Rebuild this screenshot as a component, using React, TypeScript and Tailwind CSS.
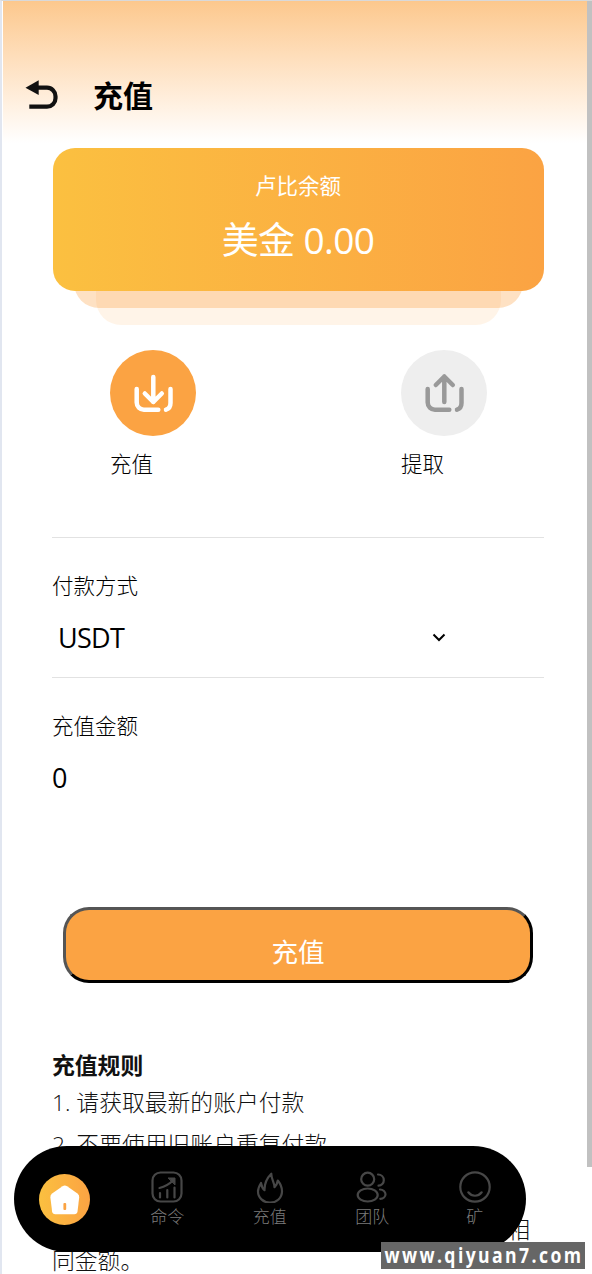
import type { ReactNode } from 'react';

interface NavItem {
    label: string;
    icon: ReactNode;
}

const navItems: NavItem[] = [
    {
        label: '命令',
        icon: (
            <>
                <rect x="1.500" y="1.500" width="29" height="29" rx="8" />
                <path d="M8.500 17c6-1.500 10-4 14-8" />
                <path d="M17.500 7h6.500v6.500z" fill="#474747" strokeWidth="1" />
                <path d="M9 22v4.500M16.300 19v7.500M23.500 16.500v10" />
            </>
        ),
    },
    {
        label: '充值',
        icon: (
            <path d="M17.300 2.700c-.2 5.300 3.200 8.500 3.200 13.500 1.700-1.700 2.800-3.700 3.300-6.700 2.700 3.400 4.200 7 4.200 10.700 0 6.700-5.300 11.500-12 11.500S4 26.700 4 20.500c0-3.200 1.200-5.500 3-8.500.5 3 1.400 5.500 3.500 7.200C10.300 12.500 12.500 7.500 17.300 2.700z" />
        ),
    },
    {
        label: '团队',
        icon: (
            <>
                <circle cx="11.700" cy="8.200" r="6.500" />
                <ellipse cx="11.700" cy="24" rx="10" ry="6.500" />
                <path d="M22 3.500c3.500 0 5.800 2.700 5.800 5.700s-2.300 5.500-5.300 5.500M24 18.500c3.200 0 5.500 2.300 5.500 4.800s-2.300 4.500-5.200 4.500" />
            </>
        ),
    },
    {
        label: '矿',
        icon: (
            <>
                <circle cx="16" cy="16" r="14.700" />
                <path d="M9.300 21.300c3.700 4.600 9.700 4.600 13.400 0" />
            </>
        ),
    },
];

const rules = ['1. 请获取最新的账户付款', '2. 不要使用旧账户重复付款', '3. 付款后请提交凭证'];

function Header() {
    return (
        <header className="flex h-[147px] items-start bg-linear-to-b from-[#fcc88d] to-white to-[142px] pt-[77px] pl-[21px]">
            <svg width="36" height="33" viewBox="0 0 36 33" fill="none">
                <path d="M1.500 9.700L14.700 2.300V17z" fill="#111" />
                <path
                    d="M14 9.700h9a8.500 8.500 0 0 1 8.500 8.500v2a8.500 8.500 0 0 1-8.500 8.500H5.300"
                    stroke="#111"
                    strokeWidth="4.200"
                />
            </svg>
            <h1 className="ml-[33px] text-[30px] leading-9 font-bold">充值</h1>
        </header>
    );
}

function BalanceCard() {
    return (
        <section className="relative ml-[49.500px] h-[177px] w-[491px]">
            {/* Stacked sheets under the card */}
            <div className="absolute inset-x-[43px] top-24 bottom-0 rounded-[25px] bg-[#fba343]/12" />
            <div className="absolute inset-x-[21px] top-20 bottom-[17px] rounded-[25px] bg-[#fba343]/32" />
            <div className="relative flex h-[143px] flex-col items-center rounded-[22px] bg-linear-to-r from-[#fbc040] to-[#fba343] pt-[22px] text-white">
                <p className="text-[21.500px] leading-[32px]">卢比余额</p>
                <p className="mt-[10px] text-[37px] leading-[56px] tracking-[-0.600px]">美金 0.00</p>
            </div>
        </section>
    );
}

function TransferAction({ label, active, children }: { label: string; active?: boolean; children: ReactNode }) {
    return (
        <div className="w-[86px]">
            <div className={active ? 'rounded-full bg-[#fba343] text-white' : 'rounded-full bg-[#eee] text-[#999]'}>
                <svg
                    className="size-[86px]"
                    viewBox="0 0 86 86"
                    fill="none"
                    stroke="currentColor"
                    strokeWidth="4.500"
                    strokeLinecap="round"
                    strokeLinejoin="round"
                >
                    {children}
                    <path d="M26.700 39v13.500a7.200 7.200 0 0 0 7.200 7.200h14.400M60.500 39v14c0 3.500-1.500 5.700-4.500 6.700" />
                </svg>
            </div>
            <p className="mt-3 text-[21.500px] leading-8 font-light">{label}</p>
        </div>
    );
}

function BottomNav() {
    return (
        <nav className="absolute top-[1145px] left-[11.500px] grid h-[106px] w-[512.500px] grid-cols-5 items-center justify-items-center rounded-full bg-black text-[#7c7c7c]">
            <svg className="size-[51px]" viewBox="0 0 51 51">
                <defs>
                    <linearGradient id="home">
                        <stop stopColor="#fbc040" />
                        <stop offset="1" stopColor="#fba343" />
                    </linearGradient>
                </defs>
                <circle cx="25.500" cy="25.500" r="25.500" fill="url(#home)" />
                <path
                    d="M23.500 12.200q2.300-1.600 4.600 0L38.500 19.500q2 1.500 1.700 4L38.500 37.500q-.4 2.800-3.200 2.800H16.300q-2.800 0-3.200-2.800L11.400 23.500q-.3-2.500 1.700-4z"
                    fill="#fff"
                />
                <rect x="24.400" y="29" width="2.800" height="7" rx="1" fill="#fba343" />
            </svg>
            {navItems.map((item) => (
                <div key={item.label} className="flex flex-col items-center pt-0.5">
                    <svg
                        className="size-8"
                        viewBox="0 0 32 32"
                        fill="none"
                        stroke="#474747"
                        strokeWidth="2.200"
                        strokeLinecap="round"
                        strokeLinejoin="round"
                    >
                        {item.icon}
                    </svg>
                    <span className="mt-0.5 text-[17px] leading-6 font-light">{item.label}</span>
                </div>
            ))}
        </nav>
    );
}

export default function App() {
    return (
        <div className="relative h-[1274px] w-[592px] overflow-hidden border-t border-l-2 border-t-[#d9d9d9] border-l-[#e1e6f0] bg-white font-['Open_Sans','Noto_Sans_CJK_SC',sans-serif] text-black">
            <div className="w-[585px] pl-px">
                <Header />
                <BalanceCard />

                <div className="mt-[25px] ml-[107px] flex gap-[205px]">
                    <TransferAction label="充值" active>
                        <path d="M43.300 27v25M34.800 43.500l8.500 8.500 8.500-8.500" />
                    </TransferAction>
                    <TransferAction label="提取">
                        <path d="M43.300 52V26.500M34.800 35l8.500-8.500 8.500 8.500" />
                    </TransferAction>
                </div>

                <div className="mr-[43px] ml-[49px] mt-[57px] border-y border-[#e2e2e2] pt-8">
                    <p className="text-[21.500px] leading-8 font-light">付款方式</p>
                    <div className="mt-4 flex h-[59px] items-start pl-[6px]">
                        <span className="w-[374px] text-[27px] leading-[40px] tracking-[-0.700px]">USDT</span>
                        <svg className="mt-[15px]" width="14" height="9" viewBox="0 0 14 9" fill="none">
                            <path d="M1.500 1.500L7 7l5.500-5.500" stroke="#000" strokeWidth="2" />
                        </svg>
                    </div>
                </div>

                <div className="mx-[49px] mt-8">
                    <p className="text-[21.500px] leading-8 font-light">充值金额</p>
                    <p className="mt-4 text-[27px] leading-[40px]">0</p>
                </div>

                <button className="mt-[109px] ml-[60px] block h-[76px] w-[470px] rounded-[26px] border-3 border-t-[#555] border-r-black border-b-black border-l-[#555] bg-[#fba343] pt-[15px] text-[26.600px] text-white">
                    充值
                </button>

                <section className="mx-[49px] mt-[68px] text-[22.800px] leading-[30.500px] text-[#111]">
                    <h2 className="font-bold">充值规则</h2>
                    <div className="mt-[6px] space-y-3 font-light">
                        {rules.map((rule) => (
                            <p key={rule}>{rule}</p>
                        ))}
                        <div className="w-[478px]">
                            <p className="flex justify-between">
                                <span>4. 请支付</span>
                                <span>相</span>
                            </p>
                            <p>同金额。</p>
                        </div>
                    </div>
                </section>
            </div>

            <BottomNav />

            {/* Scrollbar thumb */}
            <div className="absolute top-0 right-0 h-[1166px] w-[5px] bg-[#c1c1c1]" />

            <div className="absolute right-[7px] bottom-[5px] flex h-[27px] w-[204px] items-center justify-center bg-[#666] font-['Open_Sans',sans-serif] text-[22px] font-bold tracking-[3px] text-white">
                <span className="scale-x-[0.8] pb-0.5 pl-[3px]">www.qiyuan7.com</span>
            </div>
        </div>
    );
}
